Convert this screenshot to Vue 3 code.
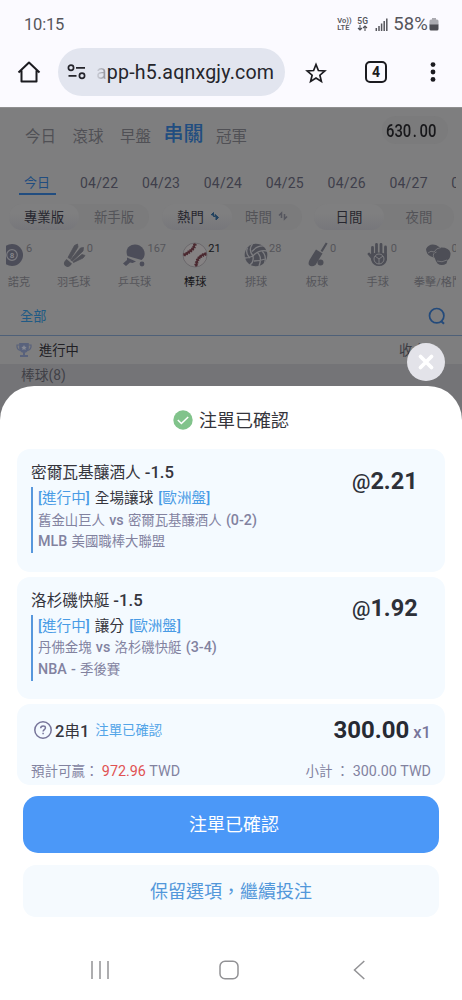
<script setup>
const tabs = ['今日', '滾球', '早盤', '串關', '冠軍']
const dates = ['04/22', '04/23', '04/24', '04/25', '04/26', '04/27', '04/28']
const pills = [
  { a: '專業版', b: '新手版', sort: false },
  { a: '熱門', b: '時間', sort: true },
  { a: '日間', b: '夜間', sort: false },
]
const sports = [
  { icon: 'snooker', name: '諾克', count: '6' },
  { icon: 'shuttle', name: '羽毛球', count: '0' },
  { icon: 'pingpong', name: '乒乓球', count: '167' },
  { icon: 'baseball', name: '棒球', count: '21' },
  { icon: 'volley', name: '排球', count: '28' },
  { icon: 'cricket', name: '板球', count: '0' },
  { icon: 'hand', name: '手球', count: '0' },
  { icon: 'boxing', name: '拳擊/格鬥', count: '0' },
]
const bets = [
  { team: '密爾瓦基釀酒人', line: '-1.5', market: '全場讓球', match: '舊金山巨人 vs 密爾瓦基釀酒人 (0-2)', league: 'MLB 美國職棒大聯盟', odds: '2.21' },
  { team: '洛杉磯快艇', line: '-1.5', market: '讓分', match: '丹佛金塊 vs 洛杉磯快艇 (3-4)', league: 'NBA - 季後賽', odds: '1.92' },
]
// Splits a label into Latin and Chinese runs so each can be sized on its own.
const runs = (text) => text.split(/([\x20-\x7e]+)/).filter(Boolean).map((t) => ({ t, latin: /^[\x20-\x7e]/.test(t) }))
</script>

<template>
  <div class="screen">
    <header class="status">
      <span class="clock">10:15</span>
      <div class="indicators">
        <span class="tiny"><i>Vo))</i><i>LTE</i></span>
        <span class="tiny fiveg"><i>5G</i>
          <svg width="11" height="6" viewBox="0 0 11 6"><path d="M3 0v5M1 3l2 2 2-2M8 6V1M6 3l2-2 2 2" fill="none" stroke="#505057" stroke-width="1.1" /></svg>
        </span>
        <svg class="signal" width="13" height="13" viewBox="0 0 13 13"><path d="M1.3 13v-3M4 13V8M6.6 13V5.5M9.2 13V3M11.8 13V.5" stroke="#56565c" stroke-width="1.5" /></svg>
        <span class="percent">58%</span>
        <svg width="10" height="13" viewBox="0 0 10 13"><path d="M3 0h4v1.5h1a1.5 1.5 0 0 1 1.500 1.500V7h-9V3A1.500 1.500 0 0 1 2 1.500h1z" fill="#aaaab0" /><path d="M.5 6.500h9V11A1.500 1.500 0 0 1 8 12.500H2A1.500 1.500 0 0 1 .5 11z" fill="#4d4d53" /></svg>
      </div>
    </header>

    <div class="browser">
      <svg class="home" width="24" height="24" viewBox="0 0 24 24"><path d="M1.500 12.500 12 2.500l10.500 10M4.500 10.500V21.500h15V10.500" fill="none" stroke="#1b1b20" stroke-width="2" stroke-linejoin="round" /></svg>
      <div class="url">
        <svg width="20" height="16" viewBox="0 0 20 16"><g fill="none" stroke="#24242b" stroke-width="1.700"><circle cx="4" cy="3.800" r="2.600" /><path d="M9 3.800h9M1.500 11.800h8" /><circle cx="15" cy="11.800" r="2.600" /></g></svg>
        <span class="address"><span class="fade">a</span>pp-h5.aqnxgjy.com</span>
      </div>
      <svg class="star" width="22" height="22" viewBox="0 0 22 22"><path d="m11 2.500 2.400 6 6.400.5-4.900 4.200 1.500 6.300L11 16.100l-5.400 3.400 1.500-6.300L2.200 9l6.400-.5z" fill="none" stroke="#1b1b20" stroke-width="1.700" /></svg>
      <span class="tabcount">4</span>
      <svg class="dots" width="6" height="20" viewBox="0 0 6 20"><g fill="#1b1b20"><circle cx="3" cy="2.600" r="2.400" /><circle cx="3" cy="10" r="2.400" /><circle cx="3" cy="17.400" r="2.400" /></g></svg>
    </div>

    <main class="page">
      <nav class="tabs">
        <span v-for="t in tabs" :key="t" :class="{ on: t === '串關' }">{{ t }}</span>
        <div class="balance"><b>630<i>.</i>00</b></div>
      </nav>

      <div class="dates">
        <span class="today">今日</span>
        <span v-for="d in dates" :key="d" class="date">{{ d }}</span>
      </div>

      <div class="pills">
        <div v-for="p in pills" :key="p.a" class="pill">
          <span class="active">{{ p.a }}<svg v-if="p.sort" width="10" height="10" viewBox="0 0 10 10"><path d="M1 4 3.500 1.500v4H5V3.500l3.500 3L6 9V6" fill="#20415f" stroke="#20415f" /></svg></span>
          <span>{{ p.b }}<svg v-if="p.sort" width="10" height="10" viewBox="0 0 10 10"><path d="M1 4.500 3.500 2v5M9 5.500 6.500 8V3" fill="none" stroke="#55565e" stroke-width="1.500" /></svg></span>
        </div>
      </div>

      <div class="sports">
        <div v-for="s in sports" :key="s.name" class="sport" :class="s.icon">
          <div class="art">
            <svg width="26" height="26" viewBox="0 0 26 26">
              <g v-if="s.icon === 'snooker'"><circle cx="12" cy="13" r="11" fill="#4c4d59" /><circle cx="12" cy="13" r="5.300" fill="none" stroke="#7b7b80" stroke-width="1.200" /><text x="12" y="16" text-anchor="middle" font-size="8" font-weight="700" fill="#85858a">8</text></g>
              <g v-else-if="s.icon === 'shuttle'" fill="#505158"><path d="M7 15.500 13.500 3.500 16.500 2 17 5 9.500 17zM9.700 18 19.500 6l3-.5-.5 3.500-10.500 10zM12 19.800 21 12.500l3 1-2 2.500-9.500 4.500z" stroke="#505158" stroke-width=".8" /><path d="m5.500 17 5.500 4.800-2 2.200a3.600 3.600 0 0 1-5.500-4.500z" /></g>
              <g v-else-if="s.icon === 'pingpong'" fill="#4c4d59"><path d="M6.500 14C2.500 5 12 0 18.500 3.500 25 7 25 15 20.500 18z" /><path d="m6 15.500 9 4-3.500 1.500-2.500-.5-4 3.500-3-2.500 4-3.500z" /><circle cx="21" cy="22" r="2.400" /></g>
              <g v-else-if="s.icon === 'baseball'"><circle cx="13" cy="13" r="12" fill="#858283" stroke="#646266" stroke-width=".8" /><g fill="none" stroke="#4b2930"><path d="M13 1.500C12 7 8.500 9.500 1.500 13.500M24.500 11.500C18 13 14.500 17 14 24.500" stroke-width="2" /><path d="M13 2C12 7 8.500 9.500 2 13M24 12C18 13.500 14.500 17.500 14 24.500" stroke-width="3.600" stroke-dasharray="1.200 1.300" /></g></g>
              <g v-else-if="s.icon === 'volley'"><circle cx="13" cy="13" r="11.300" fill="#4d4e56" /><path d="M10 14C6 9 7 5 9.500 2M7 16Q2 11 4.500 6M10 14q6-7 14.500-5M9 9.500q5-6 12-5.500M10 14q1 7-3.500 9M10 14q-4 2-8 2M14.500 10.500q5 5 1.500 13.500M19 9q5 5 2.500 12M11 19q6 0 11-2" fill="none" stroke="#7d7d80" stroke-width="1.300" /></g>
              <g v-else-if="s.icon === 'cricket'" fill="#4d4e56"><path d="m16.500 9 5.300-8.500 1.800 1L18.500 10zM12 7.500l6.500 4-7 11.500q-4 2.500-6.500 0-1-2 .5-5z" /><circle cx="16.500" cy="20.500" r="3" /></g>
              <g v-else-if="s.icon === 'hand'"><path d="M7.500 12V5.500M11.500 11V2.500M16 11V2.500M20.500 12V5M4 12l4 5" stroke="#4d4e56" stroke-width="2.800" stroke-linecap="round" /><path d="M6 12q7-3 16 0v6q-2 6-8 6t-8-6z" fill="#4d4e56" /><circle cx="14" cy="17" r="5" fill="none" stroke="#7d7d80" /><path d="m10 14 4 3 4-3M14 17v5" stroke="#7d7d80" fill="none" /></g>
              <g v-else><path d="M1 7q3-6 10-4l4 2.500q9-.5 10.500 5.500 0 6-3 7l-1 3.500q-5 3-9 0-2-3-3-6-8-1-8.500-8.500z" fill="#4d4e56" /><path d="M3 11q3-3 6-1 2-4 7-4.500M8.500 15q-1-4 3-5M12 19q5 2 10-1" fill="none" stroke="#7d7d80" stroke-width=".8" /></g>
            </svg>
            <span class="num">{{ s.count }}</span>
          </div>
          <span class="label">{{ s.name }}</span>
        </div>
      </div>

      <div class="filter">
        <span>全部</span>
        <svg width="18" height="18" viewBox="0 0 18 18"><path d="m13.500 14.500 2.500 2.200" stroke="#234a7b" stroke-width="2" /><circle cx="8.700" cy="8.700" r="7.200" fill="none" stroke="#234a7b" stroke-width="1.700" /></svg>
      </div>
      <div class="live">
        <svg width="16" height="16" viewBox="0 0 16 16"><path d="M3.500 3H1v2q.5 3 3.500 3.500M12.500 3H15v2q-.5 3-3.500 3.500" fill="none" stroke="#59627c" stroke-width="1.200" /><path d="M3.200 1h9.600v5.500Q12 10 9 10.800V13h3v2H4v-2h3v-2.200Q4 10 3.200 6.500z" fill="#59627c" /><path d="m8 3 .9 1.700 1.800.2-1.300 1.300.3 1.900L8 7.200l-1.700.9.3-1.900-1.300-1.300 1.800-.2z" fill="#878a94" /></svg>
        <span>進行中</span>
        <span class="collapse">收合</span>
      </div>
      <div class="group">棒球(8)</div>

      <section class="sheet">
        <button class="close" aria-label="關閉"><svg width="18" height="18" viewBox="0 0 18 18"><path d="m3.500 3.500 11 11M14.500 3.500l-11 11" stroke="#fff" stroke-width="3.800" stroke-linecap="round" /></svg></button>
        <h1>
          <svg width="20" height="20" viewBox="0 0 20 20"><circle cx="10" cy="10" r="9.700" fill="#81c38b" /><path d="m4.800 10 3.600 3.500 6.800-6.500" fill="none" stroke="#fff" stroke-width="1.500" /></svg>
          <span>注單已確認</span>
        </h1>

        <article v-for="b in bets" :key="b.team" class="card bet">
          <div class="info">
            <div class="team">{{ b.team }} <b>{{ b.line }}</b></div>
            <div class="detail">
              <div class="market"><em><b>[</b>進行中<b>]</b></em> {{ b.market }} <em><b>[</b>歐洲盤<b>]</b></em></div>
              <div class="sub"><span v-for="(r, i) in runs(b.match)" :key="i" :class="{ latin: r.latin }">{{ r.t }}</span></div>
              <div class="sub"><span v-for="(r, i) in runs(b.league)" :key="i" :class="{ latin: r.latin }">{{ r.t }}</span></div>
            </div>
          </div>
          <div class="odds"><span>@</span>{{ b.odds }}</div>
        </article>

        <article class="card total">
          <div class="stake">
            <svg width="20" height="20" viewBox="0 0 20 20"><circle cx="10" cy="10" r="8.200" fill="none" stroke="#77759a" stroke-width="1.500" /><path d="M7.700 8.200q0-2.300 2.400-2.300t2.300 2.100c0 1.500-2.300 1.700-2.300 3.500M10.100 12.700v1.600" fill="none" stroke="#77759a" stroke-width="1.500" /></svg>
            <span class="combo"><b>2</b>串<b>1</b></span>
            <span class="confirmed">注單已確認</span>
            <span class="amount">300.00</span>
            <span class="times">x1</span>
          </div>
          <div class="summary">
            <span>預計可贏： <em>972.96</em><span class="roman"> TWD</span></span>
            <span>小計 ：<span class="roman"> 300.00 TWD</span></span>
          </div>
        </article>

        <button class="primary">注單已確認</button>
        <button class="secondary">保留選項，繼續投注</button>

        <footer class="sysnav">
          <svg width="20" height="20" viewBox="0 0 20 20"><path d="M2 1v18M10 1v18M18 1v18" stroke="#929295" stroke-width="1.500" /></svg>
          <svg width="20" height="20" viewBox="0 0 20 20"><rect x="1" y="1.200" width="18" height="17.600" rx="5" fill="none" stroke="#929295" stroke-width="1.500" /></svg>
          <svg width="20" height="20" viewBox="0 0 20 20"><path d="M15.300 1 5.500 10l9.800 9" fill="none" stroke="#929295" stroke-width="1.500" /></svg>
        </footer>
      </section>
    </main>
  </div>
</template>

<style>
body { margin: 0; background: #fff; }
</style>

<style scoped>
* { box-sizing: border-box; }
i, em { font-style: normal; }
button { border: 0; padding: 0; font: inherit; }
.screen { width: 462px; height: 1000px; overflow: hidden; display: flex; flex-direction: column; background: #fbfaff; font-family: Roboto, "Noto Sans CJK TC", sans-serif; white-space: nowrap; }
.status { height: 48px; flex: none; display: flex; align-items: center; justify-content: space-between; padding: 0 23px 0 24px; color: #55555b; }
.clock { font-size: 16.5px; letter-spacing: -.2px; }
.indicators { display: flex; align-items: center; }
.tiny { display: flex; flex-direction: column; font-size: 7.500px; line-height: 7.500px; font-weight: 600; width: 20px; }
.fiveg { width: 18px; line-height: 8px; font-size: 8.500px; }
.signal { margin-right: 5px; }
.percent { font-size: 18.500px; margin-right: 1px; letter-spacing: .1px; }
.browser { height: 58.500px; flex: none; display: flex; align-items: flex-start; padding-left: 17px; }
.home { margin-top: 12px; }
.url { width: 227px; height: 48px; margin-left: 16.500px; border-radius: 24px; background: #e2e5ef; display: flex; align-items: center; padding-left: 9.500px; color: #25252c; font-size: 19.600px; }
.address { margin-left: 9px; letter-spacing: .18px; }
.fade { color: transparent; background: linear-gradient(90deg, #d5d7e0, #888a94); background-clip: text; -webkit-background-clip: text; }
.star { margin: 13.500px 0 0 20px; }
.tabcount { width: 22px; height: 22px; margin: 13px 0 0 38.500px; border: 2px solid #1b1b20; border-radius: 5px; font-size: 14px; font-weight: 700; line-height: 18px; text-align: center; color: #1b1b20; }
.dots { margin: 14px 0 0 42.500px; }

.page { position: relative; height: 893.500px; flex: none; background: #7e7e7f; border-top: 1px solid #8f8f90; }
.tabs { height: 55px; padding-left: 25px; display: flex; align-items: center; gap: 16.500px; font-size: 15.500px; color: #505055; }
.tabs .on { font-size: 20px; color: #214d80; font-weight: 500; position: relative; top: -3px; margin: 0 -4px; }
.balance { margin: -10px 14px 0 auto; height: 28px; width: 66px; border-radius: 14px; background: #7b7b7c; display: flex; align-items: center; padding-left: 4px; }
.balance b { font-size: 19px; font-weight: 500; color: #18181b; transform: scaleX(.78); transform-origin: left; }
.balance i { display: inline-block; width: 10.700px; padding-left: 2px; }
.dates { height: 36px; margin-right: 6px; overflow: hidden; display: flex; align-items: center; padding: 7px 0 0 19px; font-size: 14px; color: #3f3f4b; margin-top: -1px; }
.today { width: 37px; height: 24px; line-height: 24px; text-align: center; padding-right: 1px; font-size: 13px; color: #214d80; border-bottom: 2px solid #214d80; margin: 0 24px 0 0; flex: none; }
.date { width: 61.900px; flex: none; letter-spacing: .2px; }
.pills { margin-top: 6.500px; padding: 0 8px 0 9px; display: flex; justify-content: space-between; }
.pill { width: 140px; height: 26px; border-radius: 13px; background: #7b7b7c; display: flex; font-size: 13.400px; color: #535358; }
.pill span { width: 50%; display: flex; align-items: center; justify-content: center; gap: 6px; padding-bottom: 2px; }
.pill:nth-child(2) .active { padding-left: 4px; }
.pill .active { border-radius: 13px; background: linear-gradient(#7f7f80 35%, #77777b); color: #27272f; }
.sports { margin: 8.500px 6px 0; height: 58px; overflow: hidden; display: flex; }
.sport { width: 60.800px; flex: none; position: relative; display: flex; flex-direction: column; align-items: center; color: #55555a; }
.sport:first-child { margin-left: -23.500px; }
.art { position: relative; width: 26px; height: 35px; padding-top: 3px; }
.num { position: absolute; left: 26px; top: 3px; font-size: 11px; line-height: 13px; }
.label { font-size: 11.200px; line-height: 17px; }
.snooker .label { padding-left: 12px; }
.baseball { color: #151518; }
.filter { height: 39px; padding: 0 16px 0 20px; display: flex; justify-content: space-between; align-items: center; color: #205a85; font-size: 13.200px; border-bottom: 1.500px solid #4e6078; }
.live { height: 28px; display: flex; align-items: center; padding: 0 36.500px 0 16px; gap: 7px; font-size: 13.300px; color: #202024; }
.live span { margin-top: -1px; }
.live .collapse { margin-left: auto; color: #3c3c43; }
.group { height: 80px; background: #747477; padding-left: 21px; font-size: 13.800px; line-height: 22px; color: #414147; }

.sheet { position: absolute; left: 0; right: 0; bottom: 0; height: 614.500px; background: #fff; border-radius: 34px 34px 0 0; padding: 0 17px; display: flex; flex-direction: column; }
.close { position: absolute; right: 17px; top: -43px; width: 38px; height: 38px; border-radius: 50%; background: #e3e3e9; display: grid; place-items: center; }
h1 { margin: 0; height: 63.500px; flex: none; padding-top: 5px; display: flex; align-items: center; justify-content: center; gap: 6px; font-size: 18px; font-weight: 400; color: #35353c; }
h1 span { margin-top: -2px; }
.card { border-radius: 13px; background: #f4faff; color: #35353d; flex: none; }
.bet { height: 122.500px; margin-bottom: 5px; padding: 12px 0 0 14px; display: flex; }
.info { width: 321px; }
.team { font-size: 15.700px; line-height: 24px; }
.team b { font-weight: 500; font-size: 16.700px; }
.detail { border-left: 2px solid #5797dc; padding-left: 5px; height: 66px; margin-top: 2px; }
.market { font-size: 14.600px; line-height: 23px; height: 22.500px; word-spacing: 1.500px; }
.market em { color: #489be5; }
.market b { font-weight: 500; }
.sub { font-size: 13.400px; line-height: 21.500px; height: 21.500px; color: #82829f; }
.sub .latin { font-size: 14.300px; font-weight: 500; white-space: pre; word-spacing: .7px; }
.odds { font-size: 23.500px; line-height: 27px; font-weight: 700; padding-top: 6.500px; color: #2d3038; }
.odds span { font-size: 20.500px; font-weight: 500; }
.total { height: 81px; padding: 0 14px; }
.stake { height: 52px; display: flex; align-items: center; padding-left: 2px; }
.combo { font-size: 15.500px; margin: -1px 0 0 2px; }
.combo b { font-weight: 500; font-size: 16.500px; }
.confirmed { font-size: 13.400px; color: #53a5e8; margin: -2px 0 0 6px; }
.amount { margin-left: auto; font-size: 24px; font-weight: 700; color: #272a33; }
.times { font-size: 16.500px; color: #77759a; margin: 4px 0 0 4px; font-weight: 500; }
.summary { display: flex; justify-content: space-between; font-size: 13.500px; line-height: 31px; height: 29px; color: #82829f; }
.summary em { color: #e05252; font-size: 14.300px; }
.roman { font-size: 14.300px; white-space: pre; }
.primary, .secondary { margin: 11px 6px 0; height: 57px; border-radius: 15px; background: #4b98f8; color: #fff; font-size: 18px; padding: 0 0 3px 6px; flex: none; }
.secondary { margin-top: 12px; height: 52px; border-radius: 13px; background: #f5fafe; color: #5297da; padding-left: 0; }
.sysnav { display: flex; justify-content: space-between; padding: 43px 76px 0 73px; }
.sysnav svg:nth-child(2) { margin-right: 1px; }
</style>
